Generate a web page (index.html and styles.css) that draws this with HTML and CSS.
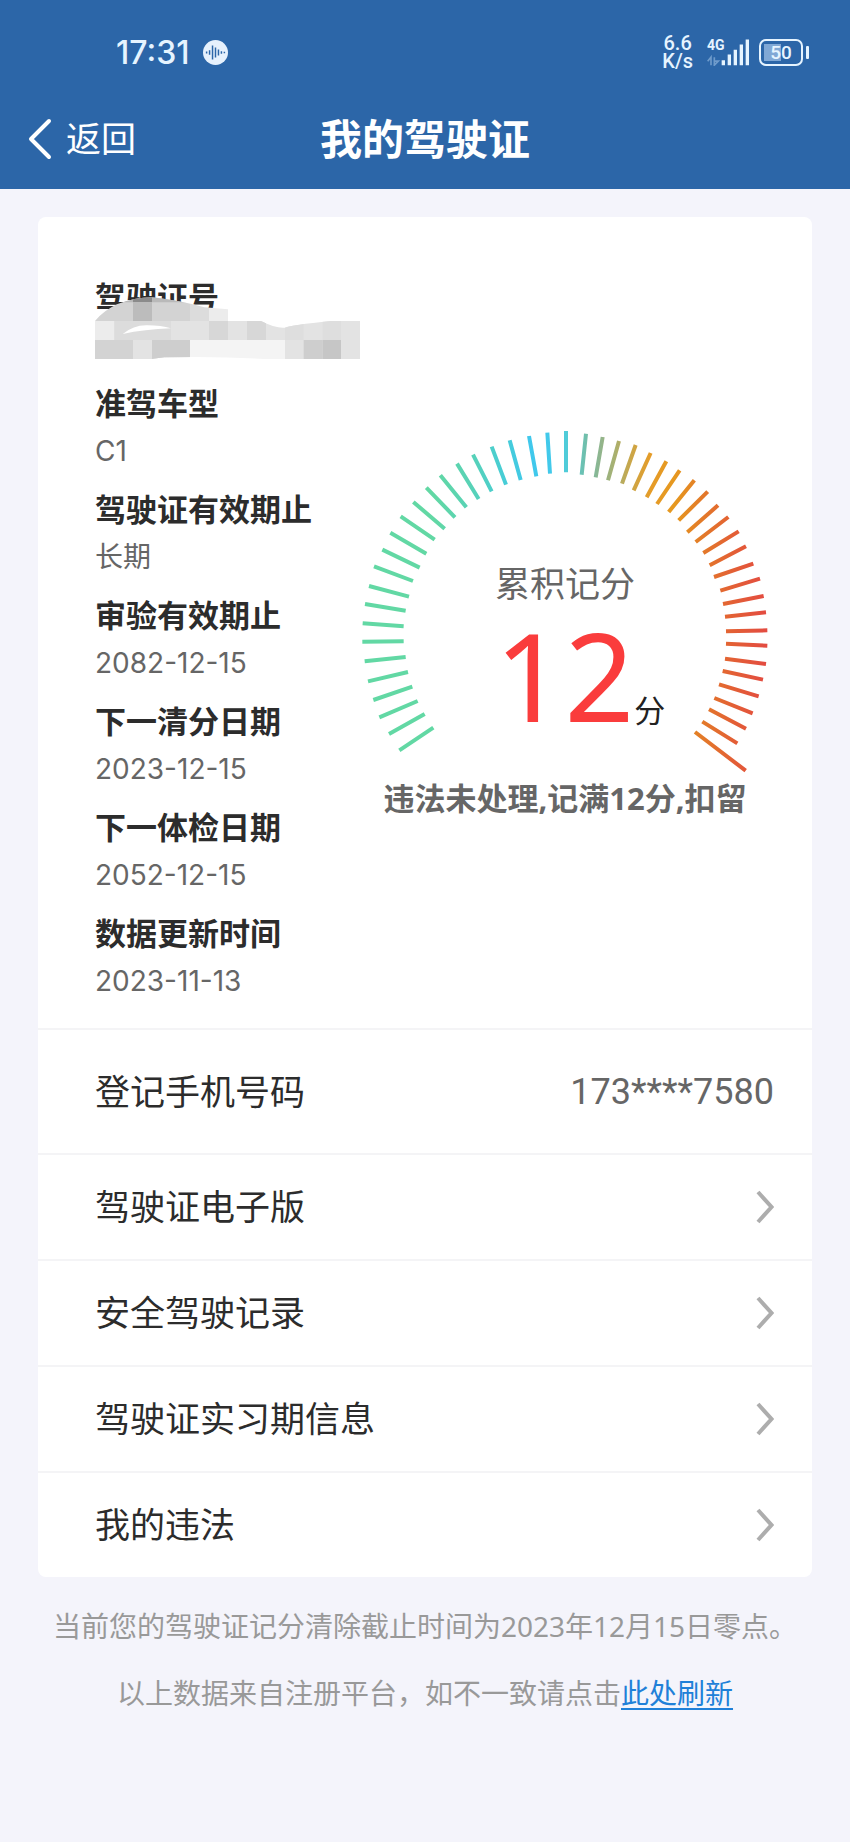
FILE: index.html
```html
<!DOCTYPE html>
<html lang="zh-CN">
<head>
<meta charset="utf-8">
<meta name="viewport" content="width=device-width, initial-scale=1">
<title>我的驾驶证</title>
<link rel="stylesheet" href="styles.css">
</head>
<body>
<svg class="symbols" aria-hidden="true">
  <symbol id="chevron" viewBox="0 0 18 34"><path d="M2 2 L15.500 17 L2 32" fill="none" stroke="currentColor" stroke-width="4"/></symbol>
</svg>

<header class="header">
  <div class="status">
    <div class="status-left">
      <span class="clock">17:31</span>
      <svg class="voice" viewBox="0 0 76 76" aria-hidden="true">
        <circle cx="38" cy="38" r="38" fill="#e6f1fd"/>
        <path d="M11 35v6M20 31v14M29 17v42M38 23v30M47 29v18M56 34v8M65 36v4" stroke="#2c66a8" stroke-width="4.500"/>
      </svg>
    </div>
    <div class="status-right">
      <span class="speed">6.6<br>K/s</span>
      <span class="network">
        <span class="network-type">4G</span>
        <svg class="signal" viewBox="0 0 126 80" aria-hidden="true">
          <path d="M2 66 L12 54 V78 M22 54 V78 L34 66 H24" fill="none" stroke="#6f9bcb" stroke-width="5"/>
          <path d="M44 63h10v15H44zM62 46h10v32H62zM80 32h10v46H80zM98 16h10v62H98zM116 1h10v77H116z" fill="#e6f4ff"/>
        </svg>
      </span>
      <span class="battery">50</span>
    </div>
  </div>
  <nav class="nav">
    <button class="back" type="button">
      <svg class="back-icon" viewBox="0 0 24 42" aria-hidden="true"><path d="M21 3 L3 21 L21 39" fill="none" stroke="currentColor" stroke-width="4" stroke-linecap="round" stroke-linejoin="round"/></svg>
      返回
    </button>
    <h1 class="title">我的驾驶证</h1>
  </nav>
</header>

<main class="main">
  <section class="card">
    <div class="summary">
      <dl class="facts">
        <div class="fact">
          <dt>驾驶证号</dt>
          <dd class="masked">
            <svg class="mosaic" viewBox="192 255 798 195" role="img" aria-label="已遮挡">
              <clipPath id="smear"><path d="M192 333 Q250 264 365 262 Q440 270 520 292 L591 298 V333 H690 Q735 356 762 353 Q780 345 900 333 H987 V447 H700 Q560 438 400 442 L360 447 H192Z"/></clipPath>
              <g clip-path="url(#smear)">
                <path fill="#d3d3d3" d="M192 255h285v192H192z"/>
                <path fill="#b9b9b9" d="M280 255h197v22H280z"/>
                <path fill="#8b8b8b" d="M306 255h57v22h-57z"/>
                <path fill="#bcbcbc" d="M306 277h57v56h-57z"/>
                <path fill="#dcdcdc" d="M477 277h57v56h-57zM250 333h170v57H250z"/>
                <path fill="#ececec" d="M534 277h57v56h-57zM192 333h58v57h-58z"/>
                <path fill="#e3e3e3" d="M420 333h567v57H420zM306 390h57v57h-57zM762 390h225v57H762z"/>
                <path fill="#d7d7d7" d="M534 333h57v57h-57zM648 333h57v57h-57z"/>
                <path fill="#dedede" d="M762 333h56v57h-56zM875 333h55v57h-55z"/>
                <path fill="#f4f4f4" d="M477 390h285v57H477z"/>
                <path fill="#cecece" d="M363 390h114v57H363zM818 390h57v57h-57z"/>
                <path fill="#c6c6c6" d="M875 390h55v57h-55z"/>
              </g>
              <path fill="#fff" d="M275 372 Q310 344 350 346 Q390 346 420 355 Q340 358 275 372Z"/>
            </svg>
          </dd>
        </div>
        <div class="fact"><dt>准驾车型</dt><dd>C1</dd></div>
        <div class="fact"><dt>驾驶证有效期止</dt><dd>长期</dd></div>
        <div class="fact"><dt>审验有效期止</dt><dd>2082-12-15</dd></div>
        <div class="fact"><dt>下一清分日期</dt><dd>2023-12-15</dd></div>
        <div class="fact"><dt>下一体检日期</dt><dd>2052-12-15</dd></div>
        <div class="fact"><dt>数据更新时间</dt><dd>2023-11-13</dd></div>
      </dl>

      <div class="gauge">
        <div class="dial">
          <svg class="ticks" viewBox="30 50 1230 1059" aria-hidden="true">
            <linearGradient id="scale" gradientUnits="userSpaceOnUse" x1="0" y1="0" x2="1250" y2="0">
              <stop offset="0.200" stop-color="#62d8a4"/>
              <stop offset="0.290" stop-color="#58d2b6"/>
              <stop offset="0.370" stop-color="#47cdd6"/>
              <stop offset="0.430" stop-color="#40c8ec"/>
              <stop offset="0.485" stop-color="#42c9ea"/>
              <stop offset="0.520" stop-color="#50ccd8"/>
              <stop offset="0.565" stop-color="#70bfac"/>
              <stop offset="0.600" stop-color="#90b58e"/>
              <stop offset="0.635" stop-color="#a8b070"/>
              <stop offset="0.675" stop-color="#cba648"/>
              <stop offset="0.720" stop-color="#e59c28"/>
              <stop offset="0.780" stop-color="#e6981f"/>
              <stop offset="0.840" stop-color="#e37c28"/>
              <stop offset="0.920" stop-color="#e35f35"/>
              <stop offset="1" stop-color="#e34b41"/>
            </linearGradient>
            <path fill="none" stroke="url(#scale)" stroke-width="12" d="M148 1020L250 952M117 971L224 911M88 921L203 872M70 869L187 829M54 813L174 785M44 753L167 740M37 694L161 693M38 639L161 648M45 581L167 601M57 527L177 559M72 468L189 512M97 418L209 472M121 367L229 430M152 318L254 388M190 275L284 355M229 232L315 321M271 195L349 291M321 160L386 266M369 133L425 243M425 109L468 223M479 90L512 209M537 77L559 198M592 67L600 190M648 62L648 186M708 70L695 193M758 80L737 201M807 92L774 210M857 104L816 220M902 128L851 240M949 153L890 261M989 180L921 281M1033 210L956 305M1073 244L986 330M1104 285L1012 366M1135 320L1037 395M1166 363L1060 428M1188 408L1079 465M1210 460L1092 500M1230 505L1111 541M1241 557L1119 581M1248 606L1125 619M1252 660L1128 663M1252 706L1128 700M1248 761L1125 745M1239 808L1118 782M1226 858L1107 822M1208 909L1093 863M1188 955L1077 897M1162 999L1057 934M1187 1081L1035 965"/>
          </svg>
          <div class="reading">
            <span class="reading-name">累积记分</span>
            <p class="score"><strong class="score-value">12</strong><span class="score-unit">分</span></p>
          </div>
        </div>
        <p class="notice">违法未处理,记满12分,扣留</p>
      </div>
    </div>

    <div class="row row-phone"><span>登记手机号码</span><span class="phone">173****7580</span></div>
    <a class="row" href="#license">驾驶证电子版<svg class="arrow" aria-hidden="true"><use href="#chevron"/></svg></a>
    <a class="row" href="#records">安全驾驶记录<svg class="arrow" aria-hidden="true"><use href="#chevron"/></svg></a>
    <a class="row" href="#probation">驾驶证实习期信息<svg class="arrow" aria-hidden="true"><use href="#chevron"/></svg></a>
    <a class="row" href="#violations">我的违法<svg class="arrow" aria-hidden="true"><use href="#chevron"/></svg></a>
  </section>

  <footer class="notes">
    <p>当前您的驾驶证记分清除截止时间为2023年12月15日零点。</p>
    <p>以上数据来自注册平台，如不一致请点击<a class="refresh" href="#refresh">此处刷新</a></p>
  </footer>
</main>
</body>
</html>
```

FILE: styles.css
```css
* {
  box-sizing: border-box;
}

body {
  margin: 0;
  min-height: 100vh;
  background: #f4f4fb;
  color: #2c2c2c;
  font-family: "Noto Sans", "Noto Sans CJK SC", sans-serif;
  font-size: 35px;
}

h1, p, dl, dd {
  margin: 0;
}

.symbols {
  display: none;
}

.header {
  background: #2c66a8;
  color: #fff;
}

.status {
  display: flex;
  justify-content: space-between;
  align-items: center;
  height: 104px;
  padding: 0 41px 0 116px;
  color: #e6f4ff;
}

.status-left,
.status-right {
  display: flex;
  align-items: center;
}

.status-left {
  gap: 13px;
}

.status-right {
  gap: 10px;
}

.clock {
  font-family: Inter, sans-serif;
  font-size: 32px;
  font-weight: 500;
}

.voice {
  width: 25px;
  height: 25px;
}

.speed {
  font-family: Roboto, sans-serif;
  font-size: 20px;
  font-weight: 500;
  line-height: 18px;
  text-align: center;
  margin-right: 4px;
}

.network {
  display: grid;
}

.network > * {
  grid-area: 1 / 1;
}

.network-type {
  font-family: Roboto, sans-serif;
  font-size: 14px;
  font-weight: 700;
  line-height: 13px;
}

.signal {
  width: 42px;
  height: 27px;
}

.battery {
  display: grid;
  place-items: center;
  position: relative;
  width: 44px;
  height: 27px;
  margin-right: 6px;
  border: 2px solid #e6f4ff;
  border-radius: 7px;
  background: linear-gradient(#80a8d5, #80a8d5) 3px 3px / 17px 17px no-repeat;
  font-family: Roboto, sans-serif;
  font-size: 19px;
  font-weight: 500;
  line-height: 19px;
}

.battery::after {
  content: "";
  position: absolute;
  right: -8px;
  top: 5px;
  width: 3px;
  height: 13px;
  border-radius: 1px;
  background: #e6f4ff;
}

.nav {
  display: grid;
  grid-template-columns: 1fr auto 1fr;
  align-items: center;
  height: 85px;
  padding: 0 28px 16px;
}

.back {
  display: flex;
  align-items: center;
  gap: 14px;
  justify-self: start;
  padding: 0;
  border: 0;
  background: none;
  color: inherit;
  font: inherit;
  line-height: 42px;
}

.back-icon {
  width: 24px;
  height: 42px;
}

.title {
  font-size: 42px;
  font-weight: 700;
  line-height: 56px;
}

.main {
  padding: 28px 38px;
}

.card {
  border-radius: 8px;
  background: #fff;
}

.summary {
  display: flex;
  justify-content: space-between;
  align-items: flex-start;
  padding: 56px 42px 24px 57px;
}

.facts {
  display: grid;
  gap: 11px;
}

.fact dt,
.fact dd {
  line-height: 48px;
}

.fact dt {
  font-size: 31px;
  font-weight: 700;
}

.fact dd {
  height: 47px;
  color: #666;
  font-family: Inter, "Noto Sans CJK SC", sans-serif;
  font-size: 28px;
}

.masked {
  position: relative;
}

.mosaic {
  position: absolute;
  left: 0;
  bottom: 8px;
  width: 266px;
  height: 65px;
}

.gauge {
  width: 410px;
  padding-top: 154px;
  text-align: center;
}

.dial {
  display: grid;
}

.dial > * {
  grid-area: 1 / 1;
}

.ticks {
  width: 100%;
}

.reading {
  padding-top: 136px;
  color: #666;
}

.reading-name {
  display: block;
  line-height: 42px;
}

.score {
  display: flex;
  justify-content: center;
  align-items: baseline;
  padding-left: 30px;
}

.score-value {
  color: #fa3c3c;
  font-size: 122px;
  font-weight: 400;
  line-height: 140px;
}

.score-unit {
  color: #222;
  font-size: 31px;
}

.notice {
  color: #666;
  font-size: 31px;
  font-weight: 700;
  line-height: 36px;
  white-space: nowrap;
}

.row {
  display: flex;
  justify-content: space-between;
  align-items: center;
  min-height: 106px;
  padding: 0 38px 0 57px;
  border-top: 2px solid #f4f4f6;
  color: inherit;
  line-height: 42px;
  text-decoration: none;
}

.row-phone {
  min-height: 125px;
}

.phone {
  color: #666;
  font-family: Roboto, sans-serif;
  font-size: 36px;
}

.arrow {
  width: 18px;
  height: 34px;
  color: #adadad;
}

.notes {
  display: grid;
  gap: 25px;
  margin: 28px -38px 0;
  color: #999;
  font-size: 28px;
  line-height: 42px;
  text-align: center;
}

.refresh {
  color: #2080d8;
  text-underline-offset: 4px;
}
```
